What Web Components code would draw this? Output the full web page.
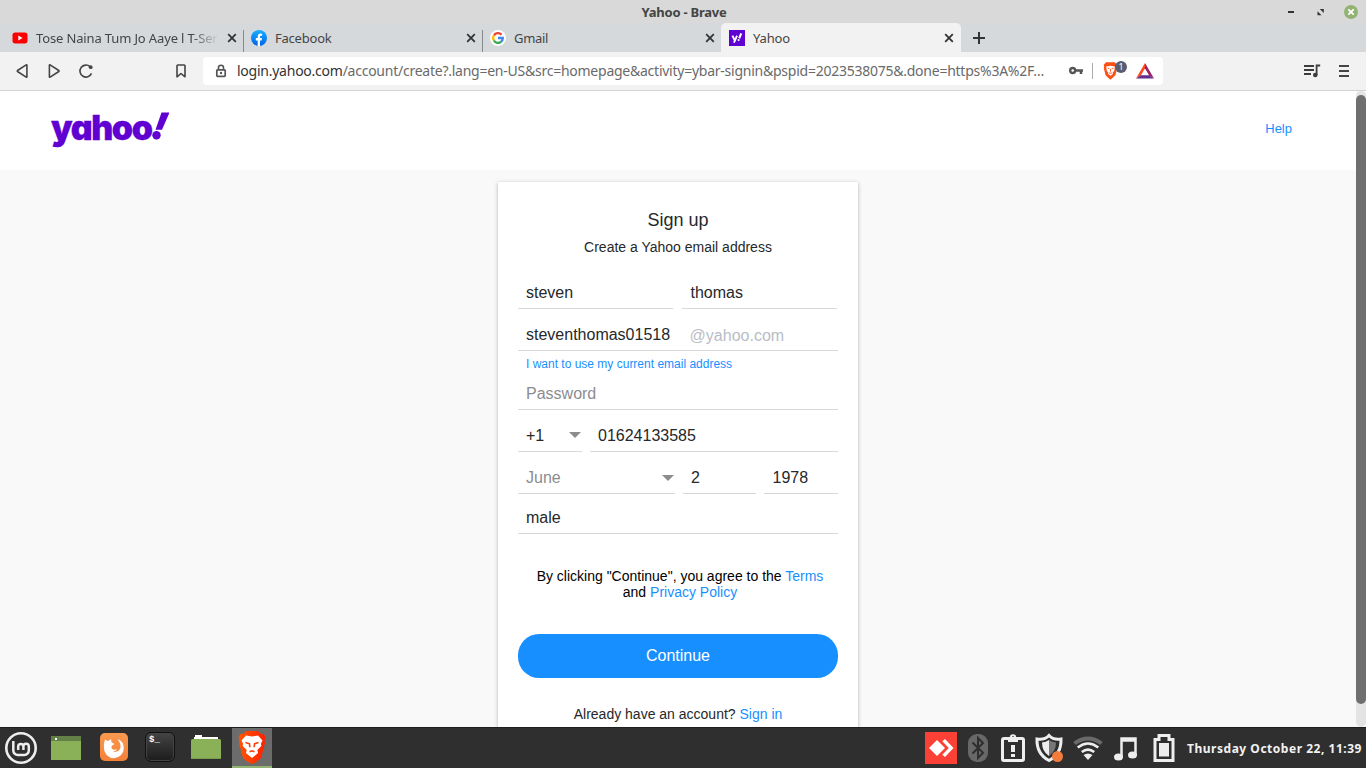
<!DOCTYPE html>
<html lang="en">
<head>
<meta charset="utf-8">
<title>Yahoo - Brave</title>
<style>
html,body{margin:0;height:100%;overflow:hidden}
body{font-family:"Liberation Sans",Arial,sans-serif}
</style>
</head>
<body>
<desk-screen></desk-screen>
<script>
const UI = '"Noto Sans","Open Sans",sans-serif';
function define(name, markup, ready) {
  const template = document.createElement('template');
  template.innerHTML = markup;
  customElements.define(name, class extends HTMLElement {
    constructor() {
      super();
      this.attachShadow({mode: 'open'}).append(template.content.cloneNode(true));
    }
    connectedCallback() { if (ready) ready.call(this, this.shadowRoot); }
  });
}

/* A single line of text tracked to an exact width */
customElements.define('fit-text', class extends HTMLElement {
  constructor() {
    super();
    this.attachShadow({mode: 'open'}).innerHTML =
      '<style>:host{display:inline-block;white-space:nowrap}span{display:inline-block}</style><span><slot></slot></span>';
  }
  connectedCallback() {
    const span = this.shadowRoot.querySelector('span');
    const want = +this.getAttribute('w');
    span.style.letterSpacing = ((want - span.getBoundingClientRect().width) / this.textContent.length) + 'px';
  }
});

/* Window title bar */
define('title-bar', `<style>
:host{display:grid;grid-template-columns:1fr auto 1fr;align-items:center;height:23px;background:#d9d9d9;color:#444;font:700 13px/23px ${UI};box-sizing:border-box}
fit-text{position:relative;top:1px;left:1px}
nav{justify-self:end;height:22px;display:flex;margin-right:7px}svg{display:block}
</style><i></i><fit-text w="85">Yahoo - Brave</fit-text><nav><svg width="80" height="22" viewBox="0 0 80 22">
<path d="M9 11h6" stroke="#333" stroke-width="2"/>
<path d="M40.800 8h4v4zM38.500 10.200v4h4z" fill="#333"/>
<circle cx="72" cy="11" r="7" fill="#92b372"/><path d="M69.300 8.300l5.400 5.400m0-5.400l-5.400 5.400" stroke="#fff" stroke-width="1.800"/></svg></nav>`);

/* Browser tab: icon slot, caption, close cross */
define('browser-tab', `<style>
:host{display:flex;align-items:center;box-sizing:border-box;height:29px;padding:1px 7px 0 8px;gap:8px;font:13px/28px ${UI};color:#444}
:host([active]){background:#f2f2f2;border-radius:5px 5px 0 0}
:host([rule]){background:linear-gradient(#878b8e,#878b8e) right 0 bottom 0/1px 22px no-repeat}
.t{flex:1;overflow:hidden;white-space:nowrap}
:host([fade]) .t{-webkit-mask:linear-gradient(90deg,#000 85%,transparent);mask:linear-gradient(90deg,#000 85%,transparent)}
svg{flex:none;display:block}::slotted(svg){display:block;flex:none}
</style><slot name="icon"></slot><div class="t"><slot></slot></div><svg width="10" height="10" viewBox="0 0 10 10"><path d="M1.200 1.200l7.600 7.600M8.800 1.200L1.200 8.800" stroke="#333" stroke-width="1.800"/></svg>`);

define('tab-strip', `<style>
:host{display:flex;height:29px;background:#d5d9dc}
browser-tab{width:239px}
browser-tab:nth-of-type(1){width:244px;padding-left:12px}
browser-tab:nth-of-type(2){padding-left:7px}
browser-tab:nth-of-type(3){width:238px;padding-left:7px;padding-right:6px}
browser-tab:nth-of-type(4){width:240px}
.plus{margin:9px 0 0 12px}
</style>
<browser-tab rule fade><svg slot="icon" width="16" height="16" viewBox="0 0 16 16"><rect x=".5" y="2.500" width="15" height="11" rx="2.700" fill="#f00"/><path d="M6.300 5.600v4.800L10.600 8z" fill="#fff"/></svg><fit-text w="192">Tose Naina Tum Jo Aaye l T-Serie</fit-text></browser-tab>
<browser-tab rule><svg slot="icon" width="16" height="16" viewBox="0 0 16 16"><defs><linearGradient id="f" x1="0" y1="0" x2="0" y2="1"><stop stop-color="#19aefe"/><stop offset="1" stop-color="#0062e3"/></linearGradient></defs><circle cx="8" cy="8" r="8" fill="url(#f)"/><path d="M6.700 16v-5.600H4.800V8h1.900V6.700c0-2 1-3.100 3-3.100l1.400.1v2h-1c-.8 0-1.100.4-1.100 1.200V8h2l-.4 2.400H9V16z" fill="#fff"/></svg><fit-text w="56.500">Facebook</fit-text></browser-tab>
<browser-tab><svg slot="icon" width="16" height="16" viewBox="0 0 16 16"><circle cx="8" cy="8" r="8" fill="#fff"/><g fill="none" stroke-width="2.300"><path d="M3.900 5.500A4.800 4.800 0 0 1 11.500 4.700" stroke="#ea4335"/><path d="M3.900 10.500A4.800 4.800 0 0 1 3.900 5.500" stroke="#fbbc05"/><path d="M11.200 11.600A4.800 4.800 0 0 1 3.900 10.500" stroke="#34a853"/><path d="M8 8h4.800c0 1.600-.6 2.800-1.600 3.600" stroke="#4285f4"/></g></svg><fit-text w="34">Gmail</fit-text></browser-tab>
<browser-tab active><svg slot="icon" width="16" height="16" viewBox="0 0 16 16"><path fill="#5f01d1" d="M0 0h16v16H0z"/><path d="M3.400 5.600l2.200 4.600M8 5.600l-3 7" stroke="#fff" stroke-width="1.900"/><path d="M12.200 3.300l-2 5" stroke="#fff" stroke-width="2.100"/><circle cx="9.600" cy="10.100" r="1.100" fill="#fff"/></svg><fit-text w="37">Yahoo</fit-text></browser-tab>
<svg class="plus" width="12" height="12" viewBox="0 0 12 12"><path d="M6 0v12M0 6h12" stroke="#333" stroke-width="2"/></svg>`);

/* Navigation toolbar and address field */
define('tool-bar', `<style>
:host{display:flex;align-items:center;height:39px;box-sizing:border-box;background:#f2f2f2;border-bottom:1px solid #d2d2d2;font:14px/28px ${UI};color:#6a6a6a}
svg{display:block;flex:none}
.addr{display:flex;align-items:center;width:960px;height:28px;box-sizing:border-box;background:#fff;border-radius:4px;padding-left:11px}
.url{margin-left:9px;width:829px;white-space:nowrap}
.url b{font-weight:400;color:#333}
.shield{position:relative;width:33px;height:28px;margin-left:4px}
.badge{position:absolute;left:12px;top:4px;width:12px;height:12px;border-radius:6px;background:#5b5e70;color:#fff;font:9px/12px ${UI};text-align:center}
.r{margin-left:141px}
</style>
<svg width="203" height="38" viewBox="0 0 203 38" fill="none" stroke="#444" stroke-width="1.600" stroke-linejoin="round"><path d="M26.900 13.200v11.600q0 .7-.7.3L17.500 19.500q-.6-.5 0-1l8.700-5.600q.7-.4.7.3z"/><path d="M49.400 13.200v11.600q0 .7.7.3l8.700-5.600q.6-.5 0-1l-8.700-5.600q-.7-.4-.7.3z"/><path d="M91.500 21.400a6 6 0 1 1-1.500-6.800"/><circle cx="90.700" cy="15.200" r="1.900" fill="#444" stroke="none"/><path d="M177 13.800q0-.8.800-.8h6.400q.8 0 .8.800V24.800l-4-3.300-4 3.300z"/></svg>
<div class="addr"><svg width="14" height="16" viewBox="0 0 14 16"><path d="M4.500 7V4.700a2.500 2.500 0 0 1 5 0V7" fill="none" stroke="#555" stroke-width="1.600"/><rect x="2.800" y="6.800" width="8.400" height="6.500" rx=".8" fill="none" stroke="#555" stroke-width="1.700"/><circle cx="7" cy="10" r="1.200" fill="#555"/></svg>
<div class="url"><fit-text w="807"><b>login.yahoo.com</b>/account/create?.lang=en-US&amp;src=homepage&amp;activity=ybar-signin&amp;pspid=2023538075&amp;.done=https%3A%2F…</fit-text></div>
<svg width="33" height="18" viewBox="0 0 33 18"><circle cx="6.700" cy="8.500" r="2.500" fill="none" stroke="#555" stroke-width="2.400"/><path d="M9.500 8.500h7.500m-2 0v3.500" stroke="#555" stroke-width="2.500" fill="none"/><path d="M26.500 1v16" stroke="#aaa"/></svg>
<div class="shield"><svg width="22" height="28" viewBox="0 0 22 28"><g transform="translate(.7)"><path d="M4 5.200h8.500l2.600 2.500-.5 2 .4 1.500-1.700 7L8.700 22.600h-.8L3.500 18.200l-1.800-7 .4-1.500-.5-2z" fill="#fb4f15" transform="translate(-1.600)"/><path d="M2.500 9.600l4.300-.8 4.300.8-.5 4.200-1.600 1.700.2 1.500-2.400 1.800L4.400 17l.2-1.500L3 13.800z" fill="#fff"/><path d="M4 11.200l1.700.5m2.200 0l1.700-.5M6.800 12v2.700m-1.500 1.400h3" stroke="#fb4f15" stroke-width=".9"/></g></svg><span class="badge">1</span></div>
<svg width="18" height="16" viewBox="0 0 18 16"><path d="M9 0L0 15.500l5-3.200L9 5.200z" fill="#ff4724"/><path d="M9 0l9 15.500-5-3.200L9 5.200z" fill="#9e1f63"/><path d="M0 15.500h18l-5-3.200H5z" fill="#662d91"/></svg></div>
<svg class="r" width="18" height="16" viewBox="0 0 18 16"><path d="M0 3h10M0 7h10M0 11h7" stroke="#3c3c3c" stroke-width="1.800"/><path d="M12.600 12V2.500h3.600" fill="none" stroke="#3c3c3c" stroke-width="1.800"/><circle cx="11.300" cy="12" r="2.300" fill="#3c3c3c"/></svg>
<svg style="margin-left:17px" width="10" height="14" viewBox="0 0 10 14"><path d="M0 2h10M0 7h10M0 12h10" stroke="#444" stroke-width="1.900"/></svg>`);

define('yahoo-logo', `<style>
:host{display:flex;font:900 34px/40px Inter,"Open Sans",sans-serif;font-feature-settings:"cv11";color:#6001d2;-webkit-text-stroke:.3px #6001d2;height:40px}
fit-text{padding-top:.5px}
svg{display:block}
</style><fit-text w="100.500">yahoo</fit-text><svg width="17" height="40" viewBox="0 0 17 40" fill="#6001d2"><path d="M9.500 5.500h8L10 22.800H3.500z"/><circle cx="4.500" cy="28.200" r="4.200"/></svg>`);

/* Underlined form field; "menu" adds a drop arrow */
define('form-field', `<style>
:host{display:flex;align-items:center;box-sizing:border-box;height:32px;border-bottom:1px solid #d8d8dc;padding:0 0 1px 8px;font-size:16px;line-height:31px;color:#26282a;white-space:nowrap}
:host([hint]){color:#8c8c90}
div{flex:1;display:flex}
i{display:none;width:0;border:solid transparent;border-top-color:#8c8c8c;border-width:6px 6px 0;margin-right:1px}
:host([menu]) i{display:block}
:host([menu][hint]) i{margin:2px 1px 0 0}
</style><div><slot></slot></div><i></i>`);

define('sign-up', `<style>
:host{display:block;box-sizing:border-box;width:360px;height:545px;background:#fff;box-shadow:0 1px 4px rgba(0,0,0,.28);padding:27px 20px 0;text-align:center;color:#26282a}
h1{font:400 18px/22px "Liberation Sans",Arial,sans-serif;margin:0}
h2{font:400 14px/16px "Liberation Sans",Arial,sans-serif;margin:8px 0 22px}
.row{display:grid;margin-bottom:10px;text-align:left}
.names{grid-template-columns:155px 155px;column-gap:9px}
.names form-field + form-field{padding-left:8.500px}
.mail{margin-bottom:0}.dom{color:#b9bdc5;margin-left:19.500px;position:relative;top:1px}
.alt{font-size:12px;line-height:16px;margin:5px 0 6px 8px;text-align:left}
a{color:#188fff}
.phone{grid-template-columns:64px 248px;column-gap:8px}
.birth{grid-template-columns:157px 73px 74px;column-gap:8px;margin-bottom:8px}
.birth form-field:last-child{padding-left:8.500px}
p{margin:34px 14px 34px 18px;font-size:14px;line-height:16px;color:#000}
button{display:block;width:320px;height:44px;border:0;border-radius:21px;background:#188fff;color:#fff;font:16px/42px "Liberation Sans",Arial,sans-serif;padding:0}
.in{font-size:14px;line-height:16px;margin-top:28px}
</style><h1>Sign up</h1><h2>Create a Yahoo email address</h2>
<div class="row names"><form-field>steven</form-field><form-field>thomas</form-field></div>
<div class="row mail"><form-field>steventhomas01518<span class="dom">@yahoo.com</span></form-field></div>
<div class="alt"><a>I want to use my current email address</a></div>
<div class="row"><form-field hint>Password</form-field></div>
<div class="row phone"><form-field menu>+1</form-field><form-field>01624133585</form-field></div>
<div class="row birth"><form-field hint menu>June</form-field><form-field>2</form-field><form-field>1978</form-field></div>
<div class="row" style="margin:0"><form-field>male</form-field></div>
<p>By clicking "Continue", you agree to the <a>Terms</a> and <a>Privacy Policy</a></p>
<button>Continue</button>
<div class="in">Already have an account? <a>Sign in</a></div>`);

define('web-page', `<style>
:host{display:grid;grid-template-columns:1356px 10px;height:636px;background:#f9f9f9;overflow:hidden}
main{height:636px;overflow:hidden}
header{height:79px;box-sizing:border-box;background:#fff;display:flex;justify-content:space-between;padding:16px 64px 0 51px}
.help{color:#188fff;font-size:13px;line-height:16px;margin-top:14px}
sign-up{margin:12px auto 0 498px}
.bar{background:#e4e4e4;border-radius:5px;padding-top:4px;height:632px}
.bar i{display:block;height:609px;border-radius:5px;background:#6f6f6f}
</style><main><header><yahoo-logo></yahoo-logo><span class="help">Help</span></header><sign-up></sign-up></main><div class="bar"><i></i></div>`);

/* Desktop panel */
define('task-bar', `<style>
:host{display:flex;align-items:center;height:41px;box-sizing:border-box;background:#2f2f2f;border-top:1px solid #1e1e1e;color:#fff;font:700 12px/40px ${UI}}
svg{display:block;flex:none}
.term{display:block;box-sizing:border-box;width:30px;height:30px;margin:-2px 0 0 15px;border:1px solid #111;border-radius:6px;background:linear-gradient(#444,#1c1c1c);box-shadow:inset 0 0 0 1px #444;font:700 9px/13px "Liberation Mono",monospace;padding:1px 0 0 3px}
.brave{width:40px;height:40px;box-sizing:border-box;background:#6c6c6c;border-bottom:2px solid #92b372;margin-left:11px;display:flex;justify-content:center;padding-top:3px}
.tray{display:flex;align-items:center;margin-left:653px}
fit-text{margin-left:10px;position:relative;top:1px;color:#f2f2f2}
</style>
<svg width="130" height="40" viewBox="0 0 130 40"><circle cx="21" cy="20" r="14.700" fill="none" stroke="#eee" stroke-width="2.600"/><path d="M13.300 13v9.500a4.500 4.500 0 0 0 4.500 4.500h6.500a4.500 4.500 0 0 0 4.500-4.500v-4a2.700 2.700 0 0 0-5.400 0V22M23.400 18.500a2.600 2.600 0 0 0-5.200 0V22" fill="none" stroke="#eee" stroke-width="2.500"/>
<path fill="#8ab158" d="M51 8h30v24H51z"/><path fill="#638147" d="M51 8h30v5H51z"/><path fill="#fff" d="M55 10h2v2h-2z"/>
<defs><linearGradient id="o" x1="0" y1="0" x2="0" y2="1"><stop stop-color="#f99a4f"/><stop offset="1" stop-color="#f58038"/></linearGradient></defs><rect x="100" y="5" width="28" height="28" rx="5" fill="url(#o)"/><path d="M105 11.500l2.500 1.500q2-.7 3.500-2l.5 3.200 3 1.800-2.600 1.700q-1.300 2.600 1.100 3.700 2 .8 4-.5-1.500 3-4.500 2.600 5 1.700 7.500-2.500 1.500-4-1-7.500l-1.300-2.500q6 2.500 6.100 9A9.800 9.800 0 0 1 104 20.500q-.6-5 1-9z" fill="#fff"/></svg>
<span class="term">$_</span>
<svg style="margin-left:15px" width="31" height="40" viewBox="0 0 31 40"><path d="M5 9V7h7v2h16v4H4V9z" fill="#fff"/><path d="M1 12.500q0-1.500 1.500-1.500h27q1.500 0 1.500 1.500V31H1z" fill="#8ab158"/><path d="M1 30.500h30" stroke="#789b4c"/></svg>
<div class="brave"><svg width="28" height="34" viewBox="0 0 28 34"><defs><linearGradient id="b"><stop stop-color="#ff5500"/><stop offset="1" stop-color="#ff2000"/></linearGradient></defs><path d="M8 0h12l3 3h3l1.500 4-1 3 .5 2-4 15-3.500 3-5 3h-1l-5-3L5 27 1 12l.5-2-1-3L2 3h3z" fill="url(#b)"/><path d="M8 4.500l6 1L20 4.500l4.500 5-1.500 3 .3 2.500-4 4 .8 3-3 2.500-3.100 2.500-3.100-2.500-3-2.500.8-3-4-4 .3-2.500-1.500-3z" fill="#fff"/><path d="M7.500 11.500l4 1.300.3 3.500m8.700-4.800l-4 1.300-.3 3.500m-4.700 4.500l2.500-1 2.500 1" fill="none" stroke="#fb3d0a" stroke-width="1.600"/></svg></div>
<div class="tray"><svg width="252" height="40" viewBox="925 0 252 40">
<path fill="#fb4035" d="M925 4h32v32h-32z"/><path d="M929 20l8-8 8 8-8 8zM942.300 13.200l2.700-2.200 8.500 9-8.500 9-2.700-2.200 6.500-6.800z" fill="#fff"/>
<rect x="968" y="6" width="20" height="28" rx="9" fill="#686868"/><path d="M972.500 14.500l10.500 10.200-5 5.300V10l5 5-10.500 10.500" fill="none" stroke="#2f2f2f" stroke-width="2"/>
<rect x="1002.500" y="10.500" width="21" height="22" rx="1.500" fill="none" stroke="#eee" stroke-width="3"/><circle cx="1013" cy="9.500" r="2.200" fill="none" stroke="#eee" stroke-width="2"/><path fill="#eee" d="M1008 11h10v3h-10zM1011 17h4v7h-4zM1011 26h4v3h-4z"/>
<path d="M1049 7.500q-4 4.500-12 3.500-.5 15 12 21.500 12.500-6.500 12-21.500-8 1-12-3.500z" fill="none" stroke="#eee" stroke-width="3"/><path d="M1049 12q-3 2-7 2.500 0 9 7 13.500z" fill="#eee"/><path d="M1049 12q3 2 7 2.500 0 9-7 13.500z" fill="#777"/><circle cx="1057.500" cy="28.500" r="5.500" fill="#f37b3b"/>
<path d="M1074.500 15.500q13.500-10 27 0" fill="none" stroke="#6a6a6a" stroke-width="4"/><path d="M1077.700 19.500q10.300-8 20.600 0M1081.800 24q6.200-4.800 12.400 0" fill="none" stroke="#eee" stroke-width="2.600"/><path d="M1083.500 27q4.500-3 9 0l-4.500 5z" fill="#eee"/>
<path d="M1121.500 29V10.500h14V27M1121.500 12.500h14" fill="none" stroke="#eee" stroke-width="2.500"/><ellipse cx="1118.500" cy="29" rx="4.500" ry="3.500" fill="#eee"/><ellipse cx="1132.500" cy="27" rx="4.500" ry="3.500" fill="#eee"/>
<path d="M1155 11.500h4v-4h10v4h4v21h-18z" fill="none" stroke="#eee" stroke-width="3"/><path d="M1159 15h10v13.500h-10z" fill="#eee"/></svg><fit-text w="175">Thursday October 22, 11:39</fit-text></div>`);

define('desk-screen', `<style>:host{display:flex;flex-direction:column;width:1366px;height:768px;overflow:hidden}</style>
<title-bar></title-bar><tab-strip></tab-strip><tool-bar></tool-bar><web-page></web-page><task-bar></task-bar>`);
</script>
</body>
</html>
